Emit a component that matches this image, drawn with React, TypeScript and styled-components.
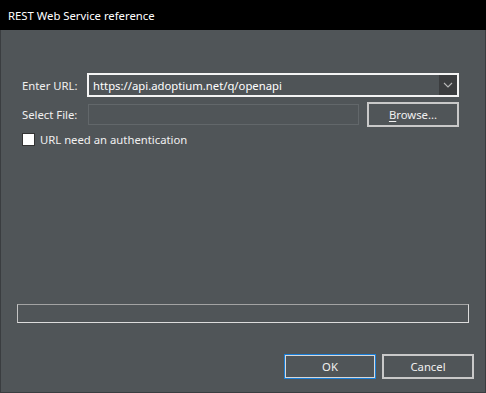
import * as React from 'react';
import styled, { createGlobalStyle } from 'styled-components';

const GlobalStyle = createGlobalStyle`
  html, body {
    margin: 0;
    padding: 0;
    background: #505558;
  }
  * {
    box-sizing: border-box;
  }
`;

const Window = styled.div`
  width: 486px;
  height: 393px;
  display: flex;
  flex-direction: column;
  background: #505558;
  border: 1px solid #3a3d40;
  border-top: none;
  font-family: "Noto Sans", "Open Sans", sans-serif;
  font-size: 11.3px;
  color: #f0f0f0;
`;

const TitleBar = styled.div`
  height: 30px;
  flex: none;
  display: flex;
  align-items: center;
  padding-left: 8px;
  background: #000;
  color: #ffffff;
  margin: 0 -1px;
`;

const Body = styled.div`
  flex: 1;
  display: flex;
  flex-direction: column;
  padding: 43px 26px 13px 16px;
`;

const Form = styled.div`
  display: grid;
  grid-template-columns: 65px 1fr;
  row-gap: 5px;
  padding-left: 5px;
  align-items: center;
`;

const Label = styled.label`
  white-space: nowrap;
`;

const Combo = styled.div`
  height: 24px;
  display: flex;
  border: 2px solid #f4f4f4;
  background: #4f5457;
`;

const ComboText = styled.div`
  flex: 1;
  display: flex;
  align-items: center;
  padding-left: 4px;
  color: #ffffff;
`;

const ComboArrow = styled.div`
  width: 18px;
  display: flex;
  align-items: center;
  justify-content: center;
  background: #3b3d3f;
`;

const FileRow = styled.div`
  display: flex;
  align-items: center;
  gap: 8px;
  padding-left: 1px;
`;

const FileField = styled.div`
  flex: 1;
  height: 21px;
  border: 1px solid #62676a;
  background: #505558;
`;

const Button = styled.button<{ $focused?: boolean }>`
  width: 92px;
  height: 25px;
  flex: none;
  font: inherit;
  color: #f0f0f0;
  background: #505558;
  border: ${(p) => (p.$focused ? '1px solid #1a7fd8' : '2px solid #c9c9c9')};
  box-shadow: ${(p) => (p.$focused ? 'inset 0 0 0 1px #d8d8d8' : 'none')};
  padding: 0;
  display: flex;
  align-items: center;
  justify-content: center;
  u {
    text-decoration: underline;
    text-underline-offset: 2px;
  }
`;

const CheckRow = styled.div`
  grid-column: 1 / span 2;
  display: flex;
  align-items: center;
  gap: 5px;
`;

const Checkbox = styled.span`
  width: 13px;
  height: 13px;
  background: #ffffff;
  border: 1px solid #333;
`;

const Spacer = styled.div`
  flex: 1;
`;

const Progress = styled.div`
  height: 19px;
  margin-right: -10px;
  border: 1px solid #dcdcdc;
  border-top-color: #a3a3a3;
  border-left-color: #c4c4c4;
`;

const Footer = styled.div`
  display: flex;
  justify-content: flex-end;
  gap: 6px;
  margin-top: 31px;
  margin-right: -15px;
`;

const Chevron = () => (
  <svg width="10" height="6" viewBox="0 0 10 6">
    <path d="M1 1 L5 5 L9 1" fill="none" stroke="#b8b8b8" strokeWidth="1.1" />
  </svg>
);

export default function App() {
  return (
    <>
      <GlobalStyle />
      <Window>
        <TitleBar>REST Web Service reference</TitleBar>
        <Body>
          <Form>
            <Label>Enter URL:</Label>
            <Combo>
              <ComboText>https://api.adoptium.net/q/openapi</ComboText>
              <ComboArrow>
                <Chevron />
              </ComboArrow>
            </Combo>
            <Label>Select File:</Label>
            <FileRow>
              <FileField />
              <Button>
                <span>
                  <u>B</u>rowse...
                </span>
              </Button>
            </FileRow>
            <CheckRow>
              <Checkbox />
              <span>URL need an authentication</span>
            </CheckRow>
          </Form>
          <Spacer />
          <Progress />
          <Footer>
            <Button $focused>OK</Button>
            <Button>Cancel</Button>
          </Footer>
        </Body>
      </Window>
    </>
  );
}
